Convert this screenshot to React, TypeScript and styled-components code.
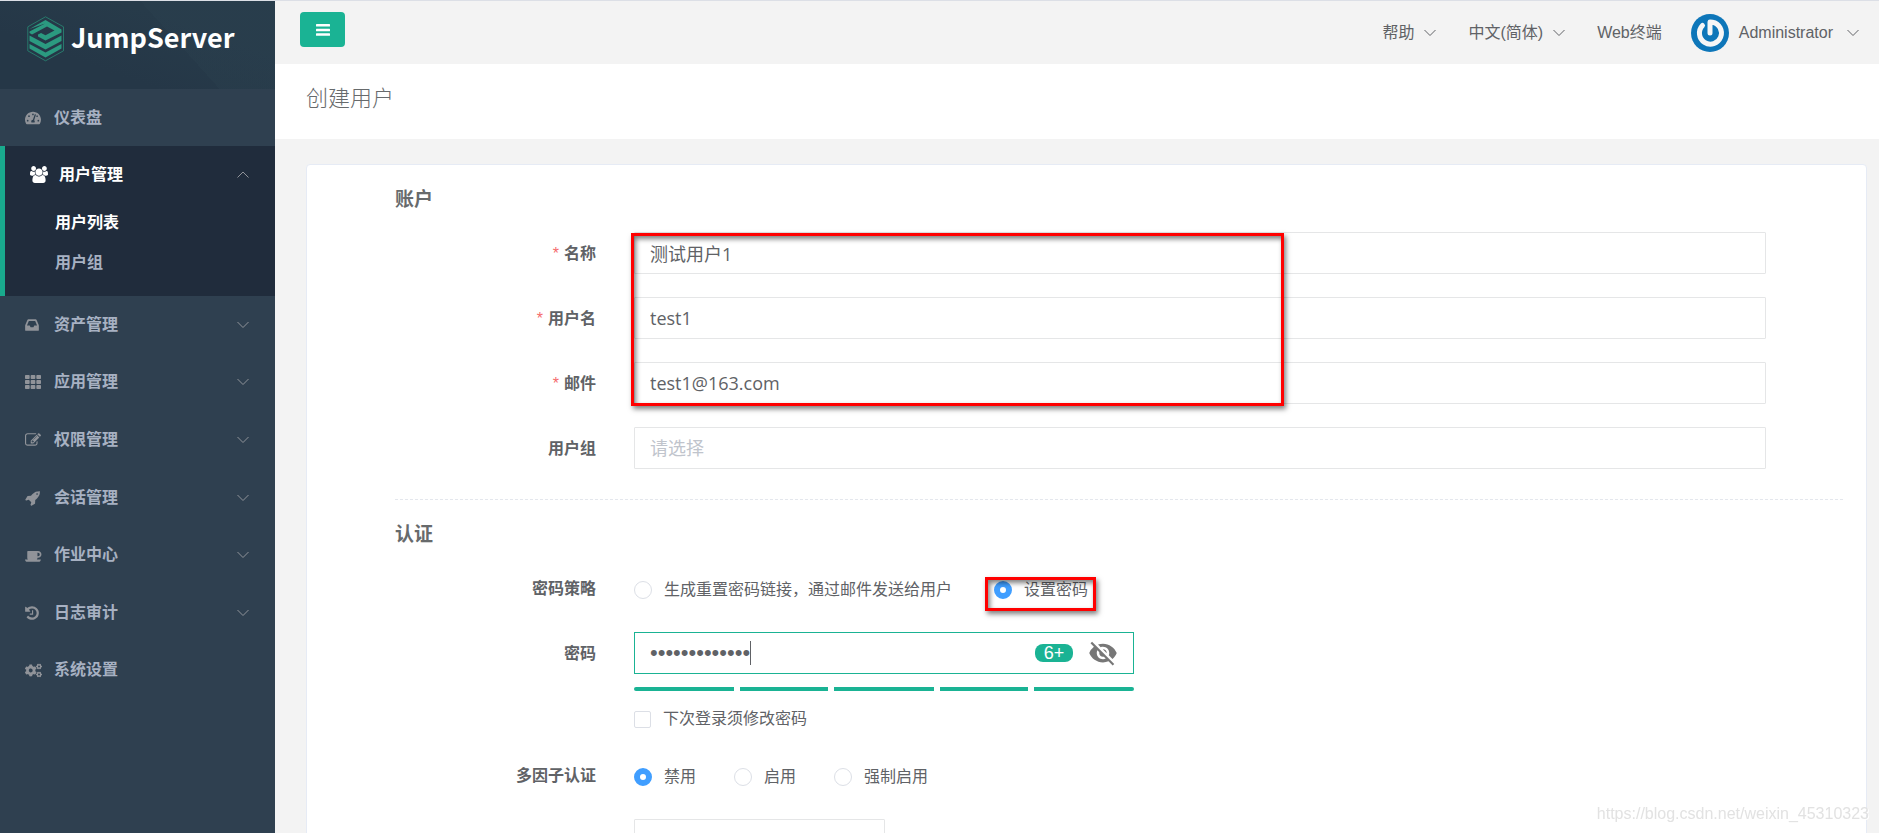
import React, { useState } from "react";
import styled, { createGlobalStyle } from "styled-components";
import { FaCogs, FaTachometerAlt, FaTh } from "react-icons/fa";
import { MdVisibilityOff } from "react-icons/md";

const GREEN = "#1ab394";
const BLUE = "#409eff";
const UI_FONT = '"Liberation Sans", "Noto Sans CJK SC", sans-serif';
const FIELD_FONT = '"Open Sans", "Noto Sans CJK SC", sans-serif';

const GlobalStyle = createGlobalStyle`
  *, *::before, *::after { box-sizing: border-box; }
  body {
    margin: 0;
    overflow: hidden;
    background: #f3f3f3;
    color: #606266;
    font: 16px/24px ${UI_FONT};
  }
  button, input, select { font: inherit; color: inherit; margin: 0; }
  a { color: inherit; text-decoration: none; }
  ul { list-style: none; margin: 0; padding: 0; }
  h1, h2 { margin: 0; }
`;

/* ---------- Shell ---------- */

const Shell = styled.div`
  display: grid;
  grid-template-columns: 275px minmax(0, 1fr);
  height: 100vh;
  overflow: hidden;
  border-top: 1px solid #dcdfe6;
`;

const Main = styled.main`
  min-width: 0;
  overflow: hidden;
`;

/* ---------- Sidebar ---------- */

const Sidebar = styled.aside`
  background: #2f4050;
  color: #a7b1c2;
  font-weight: 700;
`;

const Brand = styled.a`
  display: flex;
  align-items: flex-start;
  gap: 6px;
  height: 88px;
  padding: 15px 0 0 27px;
  color: #fff;
  background:
    linear-gradient(48deg, transparent 62%, rgba(44, 66, 80, 0.3) 62%),
    linear-gradient(20deg, #253747 30%, #273b4a 70%);
`;

const BrandName = styled.span`
  font: 700 27px/42px "Noto Sans CJK SC", sans-serif;
`;

const MenuButton = styled.button`
  display: flex;
  align-items: center;
  width: 100%;
  height: 57px;
  padding: 0 26px 0 25px;
  border: 0;
  background: none;
  color: inherit;
  font-weight: 700;
  text-align: left;
  cursor: pointer;
`;

const MenuIcon = styled.span`
  display: flex;
  width: 29px;
  color: #909399;
`;

const MenuLabel = styled.span`
  flex: 1;
`;

const OpenGroup = styled.li`
  padding-bottom: 13px;
  border-left: 5px solid #19aa8d;
  background: #202c3c;

  & > ${MenuButton} {
    color: #fff;
  }
  & ${MenuIcon} {
    color: #fff;
  }
`;

const SubLink = styled.a<{ $active?: boolean }>`
  display: block;
  padding: 8px 0 8px 50px;
  color: ${(p) => (p.$active ? "#fff" : "inherit")};
`;

const MenuRest = styled.ul`
  display: flex;
  flex-direction: column;
  min-height: 403px;

  & > li {
    flex: 1;
    display: flex;
    align-items: center;
  }
`;

/* ---------- Top bar ---------- */

const TopBar = styled.header`
  display: flex;
  align-items: center;
  height: 63px;
  padding: 0 20px 0 25px;
`;

const ToggleButton = styled.button`
  display: flex;
  align-items: center;
  justify-content: center;
  width: 45px;
  height: 35px;
  margin: 0 auto 17px 0;
  border: 0;
  border-radius: 4px;
  background: ${GREEN};
  color: #fff;
  align-self: flex-end;
`;

const TopNav = styled.nav`
  display: flex;
  align-items: center;
  gap: 32px;
`;

const TopLink = styled.button`
  display: flex;
  align-items: center;
  gap: 10px;
  padding: 0;
  border: 0;
  background: none;
  white-space: nowrap;
  cursor: pointer;
`;

const Account = styled(TopLink)`
  margin-left: -3px;
`;

const AccountName = styled.span`
  margin-right: 4px;
`;

const PageHeading = styled.div`
  height: 75px;
  padding: 16px 31px;
  background: #fff;
`;

const PageTitle = styled.h1`
  color: #676a6c;
  font: 300 22px/32px "Noto Sans CJK SC", sans-serif;
`;

/* ---------- Form ---------- */

const Card = styled.section`
  min-height: 100vh;
  margin: 25px 12px 0 31px;
  padding: 23px 23px 22px 88px;
  border: 1px solid #e6ebf5;
  border-radius: 4px;
  background: #fff;
`;

const SectionTitle = styled.h2`
  margin-bottom: 20px;
  color: #676a6c;
  font: 700 19px/24px ${UI_FONT};
`;

const Divider = styled.hr`
  margin: 30px 0 23px;
  border: 0;
  border-top: 1px dashed #e4e7ed;
`;

const Fields = styled.div`
  display: flex;
  flex-direction: column;
  gap: 23px;
`;

const Row = styled.div`
  display: grid;
  grid-template-columns: 201px minmax(0, 1fr);
  column-gap: 38px;
  padding-right: 77px;
`;

const Label = styled.label<{ $required?: boolean }>`
  height: 42px;
  color: #606266;
  font-weight: 700;
  line-height: 44px;
  text-align: right;

  &::before {
    content: ${(p) => (p.$required ? '"*"' : "none")};
    margin-right: 5px;
    color: #f56c6c;
    font-weight: 400;
  }
`;

const TextInput = styled.input`
  width: 100%;
  height: 42px;
  padding: 0 15px;
  border: 1px solid #e5e6e7;
  border-radius: 1px;
  background: #fff;
  font: 18px/24px ${FIELD_FONT};
  outline: 0;
`;

const ShortInput = styled(TextInput)`
  width: 251px;
`;

const SelectInput = styled.select`
  width: 100%;
  height: 42px;
  padding: 0 15px;
  border: 1px solid #e5e6e7;
  border-radius: 1px;
  appearance: none;
  background: #fff;
  color: #c0c4cc;
  font: 18px/24px ${FIELD_FONT};
`;

const Options = styled.div<{ $gap: number }>`
  display: flex;
  align-items: center;
  gap: ${(p) => p.$gap}px;
  height: 42px;
  padding-top: 3px;
`;

const Choice = styled.label`
  position: relative;
  display: flex;
  align-items: center;
  gap: 12px;
  white-space: nowrap;
`;

const Radio = styled.input`
  width: 18px;
  height: 18px;
  border: 1px solid #dcdfe6;
  border-radius: 50%;
  appearance: none;
  background: #fff;

  &:checked {
    border: 6px solid ${BLUE};
  }
`;

const Checkbox = styled.input`
  width: 17px;
  height: 17px;
  border: 1px solid #dcdfe6;
  border-radius: 2px;
  appearance: none;
  background: #fff;

  &:checked {
    border-color: ${BLUE};
    background: ${BLUE};
  }
`;

const PasswordColumn = styled.div`
  width: 500px;
`;

const PasswordBox = styled.div`
  display: flex;
  align-items: center;
  height: 42px;
  padding: 0 15px;
  border: 1px solid ${GREEN};
`;

const PasswordInput = styled.input`
  field-sizing: content;
  height: 24px;
  padding: 0;
  border: 0;
  outline: 0;
  background: none;
  font: 22px/24px "Liberation Sans", sans-serif;
`;

const Caret = styled.span`
  width: 1px;
  height: 24px;
  margin-right: auto;
  background: #606266;
`;

const LengthBadge = styled.span`
  width: 38px;
  border-radius: 8px;
  background: ${GREEN};
  color: #fff;
  font-size: 18px;
  line-height: 18px;
  text-align: center;
`;

const RevealButton = styled.button`
  display: flex;
  margin-left: 15px;
  padding: 0;
  border: 0;
  background: none;
  color: #777;
`;

const Strength = styled.div`
  display: grid;
  grid-template-columns: 100fr 88fr 100fr 88fr 100fr;
  gap: 6px;
  margin: 13px 0 16px;
`;

const StrengthBar = styled.span`
  height: 4px;
  background: ${GREEN};

  &:first-child {
    border-radius: 2px 0 0 2px;
  }
  &:last-child {
    border-radius: 0 2px 2px 0;
  }
`;

/* ---------- Overlays ---------- */

const Marked = styled.div`
  position: relative;
`;

const Highlight = styled.span`
  position: absolute;
  border: 3px solid #f00;
  box-shadow: 2px 3px 5px rgba(0, 0, 0, 0.5), inset 2px 3px 5px rgba(0, 0, 0, 0.5);
  pointer-events: none;
`;

const FieldsHighlight = styled(Highlight)`
  inset: 1px auto -2px 236px;
  width: 653px;
`;

const ChoiceHighlight = styled(Highlight)`
  inset: -1px -8px -9px -9px;
`;

const Watermark = styled.span`
  position: fixed;
  right: 10px;
  bottom: 7px;
  color: #e2e2e2;
  text-shadow: 1px 1px 0 #fff;
`;

/* ---------- Drawings ---------- */

function BrandMark() {
  return (
    <svg width="38" height="46" viewBox="0 0 38 46" fill="none" aria-hidden="true">
      <path d="M18.500 .8 36.500 10.800v24L18.500 44.800.8 34.800v-24z" stroke="#2a8f78" strokeWidth="1" opacity=".75" />
      <g fill="#2b9a80">
        <path d="M2.500 13 18.500 4 34.500 13.500V16.500L18.500 24.500 11 20.500V18.500L14 17 18.500 19.300 27.500 14.500 20 10.500 5 18.500 2.500 17V15.500L18 7.500z" />
        <path d="M2.500 19.500 18.500 28 34.500 19.500V25L18.500 33.500 2.500 25z" />
        <path d="M2.500 28 18.500 36.500 34.500 28V32.500L18.500 41.500 2.500 32.500z" />
      </g>
    </svg>
  );
}

const Chevron = ({ up, color = "#909399" }: { up?: boolean; color?: string }) => (
  <svg width="12" height="8" viewBox="0 0 12 8" fill="none" stroke={color} aria-hidden="true">
    <path d={up ? "M.5 6.500 6 1l5.500 5.500" : "M.5 1 6 6.500 11.500 1"} />
  </svg>
);

/* Glyphs on a 1792-unit em, 16px tall, with their own advance width. */
const Glyph = ({ units, size = 16, d }: { units: number; size?: number; d: string }) => (
  <svg
    width={Math.round((units / 1792) * size)}
    height={size}
    viewBox={`0 0 ${units} 1792`}
    fill="currentColor"
    aria-hidden="true"
  >
    <path d={d} />
  </svg>
);

const glyphs = {
  users:
    "M593 896q-162 5-265 128h-134q-82 0-138-40.500t-56-118.500q0-353 124-353 6 0 43.500 21t97.500 42.500 119 21.500q67 0 133-23-5 37-5 66 0 139 81 256zm1071 637q0 120-73 189.500t-194 69.500h-874q-121 0-194-69.500t-73-189.500q0-53 3.500-103.500t14-109 26.500-108.500 43-97.500 62-81 85.500-53.500 111.500-20q10 0 43 21.500t73 48 107 48 135 21.500 135-21.500 107-48 73-48 43-21.500q61 0 111.500 20t85.500 53.500 62 81 43 97.500 26.500 108.500 14 109 3.500 103.500zm-1024-1277q0 106-75 181t-181 75-181-75-75-181 75-181 181-75 181 75 75 181zm704 384q0 159-112.500 271.500t-271.500 112.500-271.500-112.500-112.500-271.500 112.500-271.500 271.500-112.500 271.500 112.500 112.500 271.500zm576 225q0 78-56 118.500t-138 40.500h-134q-103-123-265-128 81-117 81-256 0-29-5-66 66 23 133 23 59 0 119-21.500t97.500-42.500 43.500-21q124 0 124 353zm-128-609q0 106-75 181t-181 75-181-75-75-181 75-181 181-75 181 75 75 181z",
  inbox:
    "M1023 960h316q-1-3-2.500-8.500t-2.500-7.500l-212-496h-708l-212 496q-1 3-2.500 8.500t-2.500 7.500h316l95 192h320zm513 30v482q0 26-19 45t-45 19h-1408q-26 0-45-19t-19-45v-482q0-62 25-123l238-552q10-25 36.500-42t52.500-17h832q26 0 52.500 17t36.500 42l238 552q25 61 25 123z",
  edit:
    "M888 1184l116-116-152-152-116 116v56h96v96h56zm440-720q-16-16-33 1l-350 350q-17 17-1 33t33-1l350-350q17-17 1-33zm80 594v190q0 119-84.500 203.500t-203.500 84.500h-832q-119 0-203.500-84.500t-84.500-203.500v-832q0-119 84.500-203.500t203.500-84.500h832q63 0 117 25 15 7 18 23 3 17-9 29l-49 49q-14 14-32 8-23-6-45-6h-832q-66 0-113 47t-47 113v832q0 66 47 113t113 47h832q66 0 113-47t47-113v-126q0-13 9-22l64-64q15-15 35-7t20 29zm-96-738l288 288-672 672h-288v-288zm444 132l-92 92-288-288 92-92q28-28 68-28t68 28l152 152q28 28 28 68t-28 68z",
  rocket:
    "M1440 448q0-40-28-68t-68-28-68 28-28 68 28 68 68 28 68-28 28-68zm224-288q0 249-75.500 430.500t-253.500 360.500q-81 80-195 176l-20 379q-2 16-16 26l-384 224q-7 4-16 4-12 0-23-9l-64-64q-13-14-8-32l85-276-281-281-276 85q-3 1-9 1-14 0-23-9l-64-64q-17-19-5-39l224-384q10-14 26-16l379-20q96-114 176-195 188-187 358-258t431-71q14 0 24 9.500t10 22.500z",
  coffee:
    "M1664 832q0-80-56-136t-136-56h-64v384h64q80 0 136-56t56-136zm-1664 576h1792q0 106-75 181t-181 75h-1280q-106 0-181-75t-75-181zm1856-576q0 159-112.500 271.500t-271.500 112.500h-64v32q0 92-66 158t-158 66h-704q-92 0-158-66t-66-158v-736q0-26 19-45t45-19h1152q159 0 271.500 112.500t112.500 271.500z",
  history:
    "M1536 896q0 156-61 298t-164 245-245 164-298 61q-172 0-327-72.500t-264-204.500q-7-10-6.500-22.500t8.500-20.500l137-138q10-9 25-9 16 2 23 12 73 95 179 147t225 52q104 0 198.500-40.500t163.500-109.500 109.500-163.500 40.500-198.500-40.500-198.500-109.500-163.500-163.500-109.500-198.500-40.500q-98 0-188 35.500t-160 101.500l137 138q31 30 14 69-17 40-59 40h-448q-26 0-45-19t-19-45v-448q0-42 40-59 39-17 69 14l130 129q107-101 244.500-156.500t284.500-55.500q156 0 298 61t245 164 164 245 61 298zm-640-288v448q0 14-9 23t-23 9h-320q-14 0-23-9t-9-23v-64q0-14 9-23t23-9h224v-352q0-14 9-23t23-9h64q14 0 23 9t9 23z",
};

const BarsIcon = () => (
  <svg width="14" height="12" viewBox="0 0 14 12" fill="currentColor" aria-hidden="true">
    <rect width="14" height="2.500" rx=".5" />
    <rect y="4.700" width="14" height="2.500" rx=".5" />
    <rect y="9.300" width="14" height="2.500" rx=".5" />
  </svg>
);

const Avatar = () => (
  <svg width="38" height="38" viewBox="0 0 38 38" fill="none" aria-hidden="true">
    <circle cx="19" cy="19" r="19" fill="#0d76b9" />
    <path
      d="M11.500 11.500a11 11 0 1 0 10-3.200L19 8v11"
      stroke="#f6f6f6"
      strokeWidth="5"
      strokeLinecap="round"
      strokeLinejoin="round"
    />
  </svg>
);

const menuItems = [
  { label: "资产管理", icon: <Glyph units={1536} d={glyphs.inbox} />, expandable: true },
  { label: "应用管理", icon: <FaTh size={16} />, expandable: true },
  { label: "权限管理", icon: <Glyph units={1792} d={glyphs.edit} />, expandable: true },
  { label: "会话管理", icon: <Glyph units={1664} d={glyphs.rocket} />, expandable: true },
  { label: "作业中心", icon: <Glyph units={1920} d={glyphs.coffee} />, expandable: true },
  { label: "日志审计", icon: <Glyph units={1536} d={glyphs.history} />, expandable: true },
  { label: "系统设置", icon: <FaCogs size={17} />, expandable: false },
];

const strengthLevels = [1, 2, 3, 4, 5];

export default function App() {
  const [policy, setPolicy] = useState("custom");
  const [mfa, setMfa] = useState("禁用");
  const [password, setPassword] = useState("Welcome-12345");

  return (
    <>
      <GlobalStyle />
      <Shell>
        <Sidebar>
          <Brand href="#">
            <BrandMark />
            <BrandName>JumpServer</BrandName>
          </Brand>
          <ul>
            <li>
              <MenuButton>
                <MenuIcon><FaTachometerAlt size={16} /></MenuIcon>
                <MenuLabel>仪表盘</MenuLabel>
              </MenuButton>
            </li>
            <OpenGroup>
              <MenuButton aria-expanded="true">
                <MenuIcon><Glyph units={1920} size={17} d={glyphs.users} /></MenuIcon>
                <MenuLabel>用户管理</MenuLabel>
                <Chevron up />
              </MenuButton>
              <ul>
                <li><SubLink href="#" $active>用户列表</SubLink></li>
                <li><SubLink href="#">用户组</SubLink></li>
              </ul>
            </OpenGroup>
          </ul>
          <MenuRest>
            {menuItems.map((item) => (
              <li key={item.label}>
                <MenuButton>
                  <MenuIcon>{item.icon}</MenuIcon>
                  <MenuLabel>{item.label}</MenuLabel>
                  {item.expandable && <Chevron />}
                </MenuButton>
              </li>
            ))}
          </MenuRest>
        </Sidebar>

        <Main>
          <TopBar>
            <ToggleButton aria-label="切换菜单"><BarsIcon /></ToggleButton>
            <TopNav>
              <TopLink>帮助<Chevron color="#606266" /></TopLink>
              <TopLink>中文(简体)<Chevron color="#606266" /></TopLink>
              <TopLink as="a" href="#">Web终端</TopLink>
              <Account>
                <Avatar />
                <AccountName>Administrator</AccountName>
                <Chevron color="#606266" />
              </Account>
            </TopNav>
          </TopBar>
          <PageHeading><PageTitle>创建用户</PageTitle></PageHeading>

          <Card>
            <form>
              <SectionTitle>账户</SectionTitle>
              <Fields>
                <Marked>
                  <Fields>
                    <Row>
                      <Label htmlFor="name" $required>名称</Label>
                      <TextInput id="name" defaultValue="测试用户1" />
                    </Row>
                    <Row>
                      <Label htmlFor="username" $required>用户名</Label>
                      <TextInput id="username" defaultValue="test1" />
                    </Row>
                    <Row>
                      <Label htmlFor="email" $required>邮件</Label>
                      <TextInput id="email" type="email" defaultValue="test1@163.com" />
                    </Row>
                  </Fields>
                  <FieldsHighlight />
                </Marked>
                <Row>
                  <Label htmlFor="groups">用户组</Label>
                  <SelectInput id="groups"><option>请选择</option></SelectInput>
                </Row>
              </Fields>

              <Divider />

              <SectionTitle>认证</SectionTitle>
              <Fields>
                <Row>
                  <Label as="span" id="policy-label">密码策略</Label>
                  <Options $gap={42} role="radiogroup" aria-labelledby="policy-label">
                    <Choice>
                      <Radio
                        type="radio"
                        name="policy"
                        checked={policy === "email"}
                        onChange={() => setPolicy("email")}
                      />
                      生成重置密码链接，通过邮件发送给用户
                    </Choice>
                    <Choice>
                      <Radio
                        type="radio"
                        name="policy"
                        checked={policy === "custom"}
                        onChange={() => setPolicy("custom")}
                      />
                      设置密码
                      <ChoiceHighlight />
                    </Choice>
                  </Options>
                </Row>
                <Row>
                  <Label htmlFor="password">密码</Label>
                  <PasswordColumn>
                    <PasswordBox>
                      <PasswordInput
                        id="password"
                        type="password"
                        value={password}
                        onChange={(e) => setPassword(e.target.value)}
                      />
                      <Caret />
                      <LengthBadge>6+</LengthBadge>
                      <RevealButton type="button" aria-label="显示密码">
                        <MdVisibilityOff size={30} />
                      </RevealButton>
                    </PasswordBox>
                    <Strength>
                      {strengthLevels.map((level) => <StrengthBar key={level} />)}
                    </Strength>
                    <Choice>
                      <Checkbox type="checkbox" />
                      下次登录须修改密码
                    </Choice>
                  </PasswordColumn>
                </Row>
                <Row>
                  <Label as="span" id="mfa-label">多因子认证</Label>
                  <Options $gap={38} role="radiogroup" aria-labelledby="mfa-label">
                    {["禁用", "启用", "强制启用"].map((option) => (
                      <Choice key={option}>
                        <Radio
                          type="radio"
                          name="mfa"
                          checked={mfa === option}
                          onChange={() => setMfa(option)}
                        />
                        {option}
                      </Choice>
                    ))}
                  </Options>
                </Row>
                <Row>
                  <Label as="span" />
                  <ShortInput aria-label="来源" />
                </Row>
              </Fields>
            </form>
          </Card>
        </Main>
      </Shell>
      <Watermark>https://blog.csdn.net/weixin_45310323</Watermark>
    </>
  );
}
